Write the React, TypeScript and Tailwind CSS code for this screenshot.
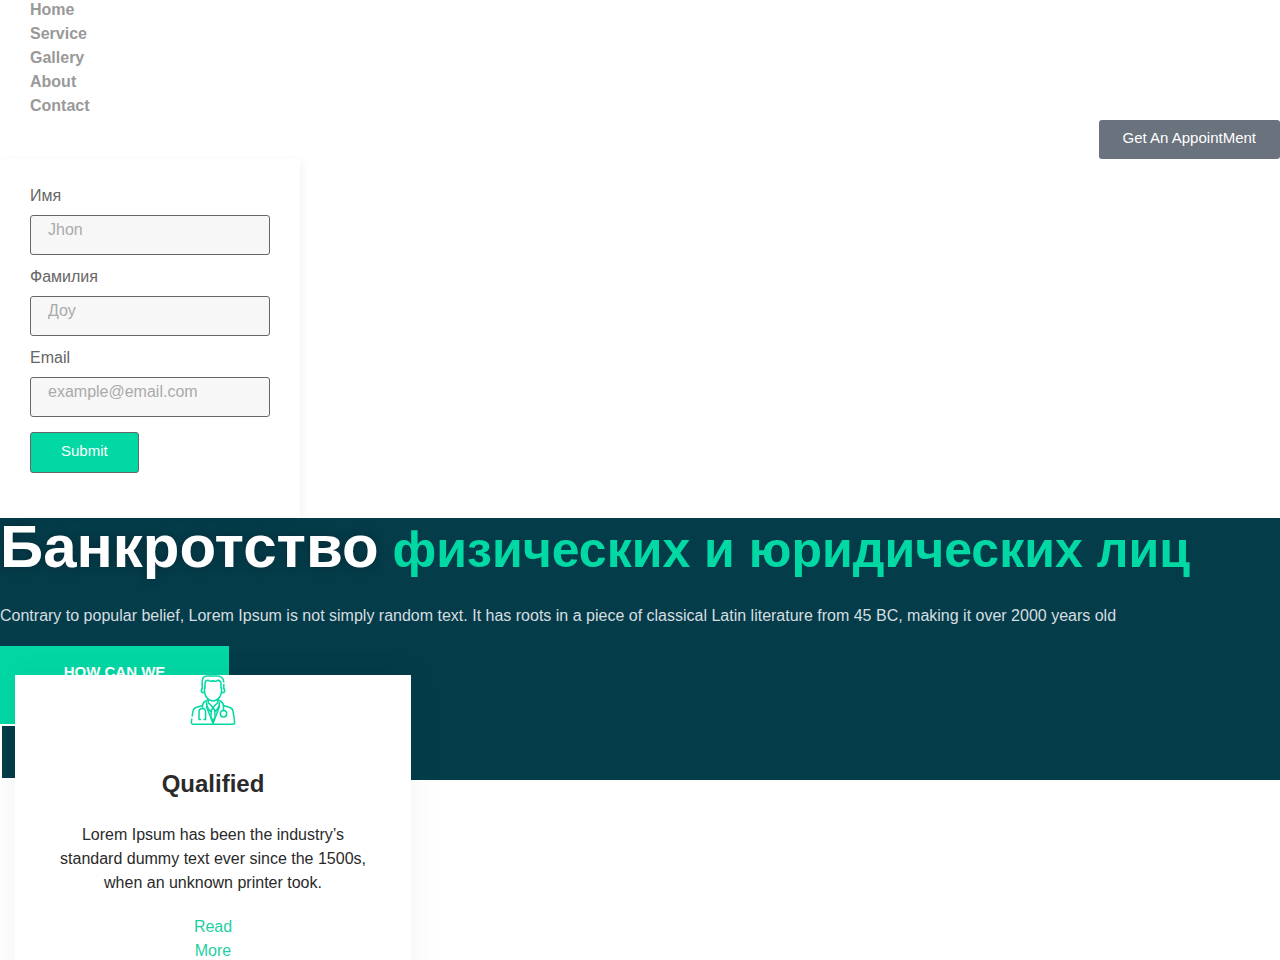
import { useState } from 'react';

const navLinks = ['Home', 'Service', 'Gallery', 'About', 'Contact'];

const fields = [
    { id: 'first-name', label: 'Имя', type: 'text', placeholder: 'Jhon' },
    { id: 'last-name', label: 'Фамилия', type: 'text', placeholder: 'Доу' },
    { id: 'email', label: 'Email', type: 'email', placeholder: 'example@email.com' },
];

function DoctorIcon() {
    return (
        <svg
            width="46"
            height="50"
            viewBox="0 0 46 50"
            fill="none"
            stroke="#02d8a4"
            strokeWidth="1.5"
            strokeLinecap="round"
            strokeLinejoin="round"
            aria-hidden="true"
        >
            {/* hair and ears */}
            <path d="M12.2 13.500V6.500Q12.200 1 17.500 1H27Q33.200 1 33.800 7" />
            <path d="M33.800 9.500V13.500" />
            <path d="M15 13V8Q15.500 5.200 18 5.200Q20.500 7 23 5.800Q25.500 7 28 5.200Q30.700 5.500 31 8V13" />
            <path d="M12.200 13.500Q10.500 15.500 12 17.500H14.500V13" />
            <path d="M33.800 13.500Q35.500 15.500 34 17.500H31.500V13" />
            {/* face */}
            <path d="M14.500 17.500Q16.500 25.500 23 26Q29.500 25.500 31.500 17.500" />
            {/* neck and collar */}
            <path d="M18.200 24.500V27.500L23 32.500L27.800 27.500V24.500" />
            <path d="M18 25Q13 26.500 12.500 30.500M28 25Q33 26.500 33.500 30.500" />
            <path d="M16.500 27.500Q16.500 32 19 34.500L20.500 36.500L23 32.500L25.500 36.500L27 34.500Q29.500 32 29.500 27.500" />
            <path d="M16.500 31.500L23 48.500L29.500 31.500" />
            <path d="M21.500 36L20.800 41.500L23 46L25.200 41.500L24.500 36" />
            {/* coat */}
            <path d="M12.500 30.500L6 32.500Q3.500 33.500 3 36L2.200 41" />
            <path d="M1.800 44L1.300 47.500Q1.500 49.200 3 49.200H42.500Q44.700 49.200 44.700 47.500L43 36Q42.500 33.500 40 32.500L33.500 30.500" />
            {/* stethoscope */}
            <path d="M12.500 30.500V33.500" />
            <path d="M10.500 44.500H9V37Q9 33.500 12.300 33.500Q15.600 33.500 15.600 37V44.500H14" />
            <path d="M33.500 30.500V35.500" />
            <circle cx="33.500" cy="38.800" r="3.200" />
        </svg>
    );
}

function ContactForm() {
    const [values, setValues] = useState<Record<string, string>>({});

    return (
        <form
            onSubmit={(e) => e.preventDefault()}
            className="relative w-[300px] max-w-full px-[30px] pt-[30px] pb-[45px] shadow-[2px_2px_10px_rgba(0,0,0,0.05)]"
        >
            {fields.map((field) => (
                <div key={field.id} className="mb-[15px]">
                    <label htmlFor={field.id} className="mb-3 block leading-[14px] text-[#666]">
                        {field.label}
                    </label>
                    <input
                        id={field.id}
                        type={field.type}
                        placeholder={field.placeholder}
                        value={values[field.id] ?? ''}
                        onChange={(e) => setValues({ ...values, [field.id]: e.target.value })}
                        className="block h-10 w-full rounded-[3px] border border-[#666] bg-[#f7f7f7] px-[17px] pb-[10px] text-[#444] placeholder:text-[#aaa]"
                    />
                </div>
            ))}
            <button
                type="submit"
                className="block rounded-[3px] border border-[#666] bg-[#02d8a4] px-[30px] pt-[6px] pb-[9px] text-[15px] leading-6 text-white"
            >
                Submit
            </button>
        </form>
    );
}

export default function App() {
    return (
        <div className="bg-white font-['Liberation_Sans',Arial,sans-serif] text-base leading-6 text-[#2a2a2a]">
            <header>
                <nav className="-mt-[2px] mb-[2px] px-[30px]">
                    <ul>
                        {navLinks.map((link) => (
                            <li key={link}>
                                <a href="#" className="font-bold text-[#999]">
                                    {link}
                                </a>
                            </li>
                        ))}
                    </ul>
                </nav>
                <div className="flex justify-end">
                    <button
                        type="button"
                        className="rounded-[3px] bg-[#69727d] px-6 pt-[6px] pb-[9px] text-[15px] leading-6 text-white"
                    >
                        Get An AppointMent
                    </button>
                </div>
            </header>

            <ContactForm />

            <section className="bg-[#053c4a]">
                <h1 className="pb-7 text-[60px] leading-[58px] font-bold text-white [text-shadow:0_0_10px_rgba(0,0,0,0.3)]">
                    Банкротство
                    <span className="text-[50px] leading-none text-[#02d8a4] [text-shadow:none]">
                        {' '}
                        физических и юридических лиц
                    </span>
                </h1>
                <p className="pb-[18px] text-[#d5dee0]">
                    Contrary to popular belief, Lorem Ipsum is not simply random text. It has roots in a piece of
                    classical Latin literature from 45 BC, making it over 2000 years old
                </p>
                <button
                    type="button"
                    className="flex h-[78px] w-[229px] justify-center bg-[#02d8a4] pt-[14px] text-[15px] leading-6 font-bold text-white uppercase"
                >
                    How can we
                </button>
                <div className="h-14 w-[229px] border-2 border-white" />
            </section>

            <article className="relative -mt-[105px] ml-[15px] flex w-[396px] max-w-full flex-col items-center bg-white px-10 pb-10 text-center shadow-[0_0_30px_rgba(0,0,0,0.06)]">
                <DoctorIcon />
                <h2 className="mt-[45px] mb-[25px] text-2xl leading-7 font-bold">Qualified</h2>
                <p className="mb-5">
                    Lorem Ipsum has been the industry’s standard dummy text ever since the 1500s, when an unknown
                    printer took.
                </p>
                <a href="#" className="w-12 text-[#1fcf9f]">
                    Read More
                </a>
            </article>
        </div>
    );
}
